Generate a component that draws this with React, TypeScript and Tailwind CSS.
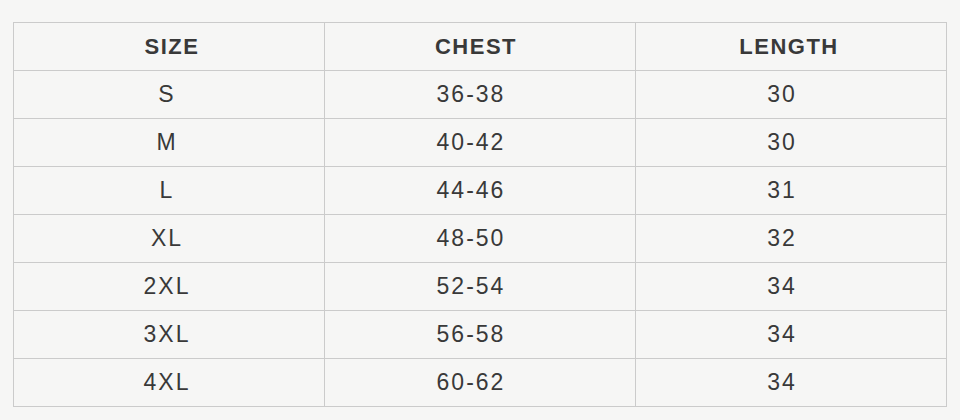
const ROWS = [
  ['S', '36-38', '30'],
  ['M', '40-42', '30'],
  ['L', '44-46', '31'],
  ['XL', '48-50', '32'],
  ['2XL', '52-54', '34'],
  ['3XL', '56-58', '34'],
  ['4XL', '60-62', '34'],
];

// body text sits a bit left of centre in the chart
const BODY_PAD = ['pr-[4px]', 'pr-[18px]', 'pr-[18px]'];
const HEAD_PAD = ['pl-[6px]', 'pr-[8px]', 'pr-[4px]'];

export default function App() {
  return (
    <div className="h-[420px] w-[960px] bg-[#f6f6f5] pl-[13px] pt-[22px] font-['Liberation_Sans',Arial,sans-serif] text-[#393939]">
      <table className="w-[934px] table-fixed border-collapse border border-[#cbcbcb]">
        <thead>
          <tr>
            {['SIZE', 'CHEST', 'LENGTH'].map((h, i) => (
              <th
                key={h}
                className={`h-[48px] border border-[#cbcbcb] text-center text-[22px] font-bold tracking-[1.5px] ${HEAD_PAD[i]}`}
              >
                {h}
              </th>
            ))}
          </tr>
        </thead>
        <tbody>
          {ROWS.map((r) => (
            <tr key={r[0]}>
              {r.map((c, i) => (
                <td
                  key={i}
                  className={`h-[48px] border border-[#cbcbcb] text-center text-[23px] tracking-[2px] ${BODY_PAD[i]}`}
                >
                  {c}
                </td>
              ))}
            </tr>
          ))}
        </tbody>
      </table>
    </div>
  );
}
